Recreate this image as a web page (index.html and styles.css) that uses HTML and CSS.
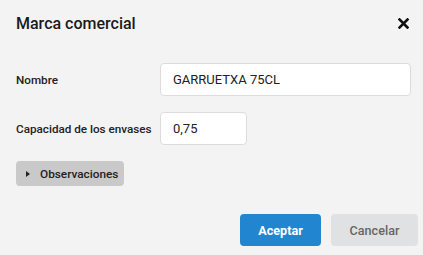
FILE: index.html
```html
<!DOCTYPE html>
<html lang="es">
<head>
    <meta charset="UTF-8">
    <meta name="viewport" content="width=device-width, initial-scale=1.0">
    <title>Marca comercial</title>
    <link rel="stylesheet" href="styles.css">
</head>
<body>
    <div class="modal">
        <div class="modal-header">
            <h2 class="modal-title">Marca comercial</h2>
            <button type="button" class="cerrar" aria-label="Cerrar">
                <svg width="11" height="11" viewBox="0 0 11 11">
                    <path d="M1.5 1.5 L9.5 9.5 M9.5 1.5 L1.5 9.5" stroke="#111" stroke-width="2.6" stroke-linecap="square"/>
                </svg>
            </button>
        </div>
        <form class="modal-body">
            <div class="form-row">
                <label for="nombre">Nombre</label>
                <input type="text" id="nombre" class="campo campo-largo" value="GARRUETXA 75CL">
            </div>
            <div class="form-row">
                <label for="capacidad">Capacidad de los envases</label>
                <input type="text" id="capacidad" class="campo campo-corto" value="0,75">
            </div>
            <button type="button" class="toggle">
                <span class="triangulo"></span>Observaciones
            </button>
        </form>
        <div class="modal-footer">
            <button type="button" class="btn btn-primario">Aceptar</button>
            <button type="button" class="btn btn-secundario">Cancelar</button>
        </div>
    </div>
</body>
</html>
```

FILE: styles.css
```css
body {
    margin: 0;
    background-color: #f3f3f3;
    font-family: Roboto, "Liberation Sans", sans-serif;
    color: #1b1b1b;
}
.modal {
    width: 423px;
    height: 255px;
    box-sizing: border-box;
}
.modal-header {
    display: flex;
    align-items: center;
    justify-content: space-between;
    padding: 13px 14px 0 16px;
    height: 20px;
}
.modal-title {
    margin: 0;
    font-size: 16px;
    font-weight: 500;
    color: #1a1a1a;
}
.cerrar {
    background: none;
    border: none;
    padding: 0;
    width: 11px;
    height: 11px;
    display: flex;
    cursor: pointer;
}
.modal-body {
    padding: 30px 12px 0 16px;
    margin: 0;
}
.form-row {
    display: flex;
    align-items: center;
    margin-bottom: 16px;
}
label {
    width: 144px;
    font-size: 11.7px;
    font-weight: 500;
    color: #222;
}
.campo {
    height: 33px;
    box-sizing: border-box;
    border: 1px solid #dcdcdc;
    border-radius: 4px;
    background: #fff;
    padding: 0 12px;
    font-family: Roboto, "Liberation Sans", sans-serif;
    font-size: 13px;
    color: #222;
}
.campo-largo {
    width: 251px;
}
.campo-corto {
    width: 87px;
}
.toggle {
    display: flex;
    align-items: center;
    margin-top: 5px;
    height: 25px;
    width: 108px;
    padding: 0 0 0 10px;
    border: none;
    border-radius: 4px;
    background-color: #c9c9c9;
    font-family: Roboto, "Liberation Sans", sans-serif;
    font-size: 11.8px;
    font-weight: 500;
    color: #222;
}
.triangulo {
    width: 0;
    height: 0;
    border-top: 3.5px solid transparent;
    border-bottom: 3.5px solid transparent;
    border-left: 4px solid #222;
    margin-right: 10px;
}
.modal-footer {
    display: flex;
    justify-content: flex-end;
    gap: 10px;
    padding: 28px 5px 0 0;
}
.btn {
    height: 32px;
    border: none;
    border-radius: 4px;
    font-family: Roboto, "Liberation Sans", sans-serif;
    font-size: 12.6px;
    cursor: pointer;
}
.btn-primario {
    width: 81px;
    background-color: #2185d0;
    color: #fff;
    font-weight: 700;
}
.btn-secundario {
    width: 87px;
    background-color: #e0e1e2;
    color: #666;
    font-weight: 500;
}
```
